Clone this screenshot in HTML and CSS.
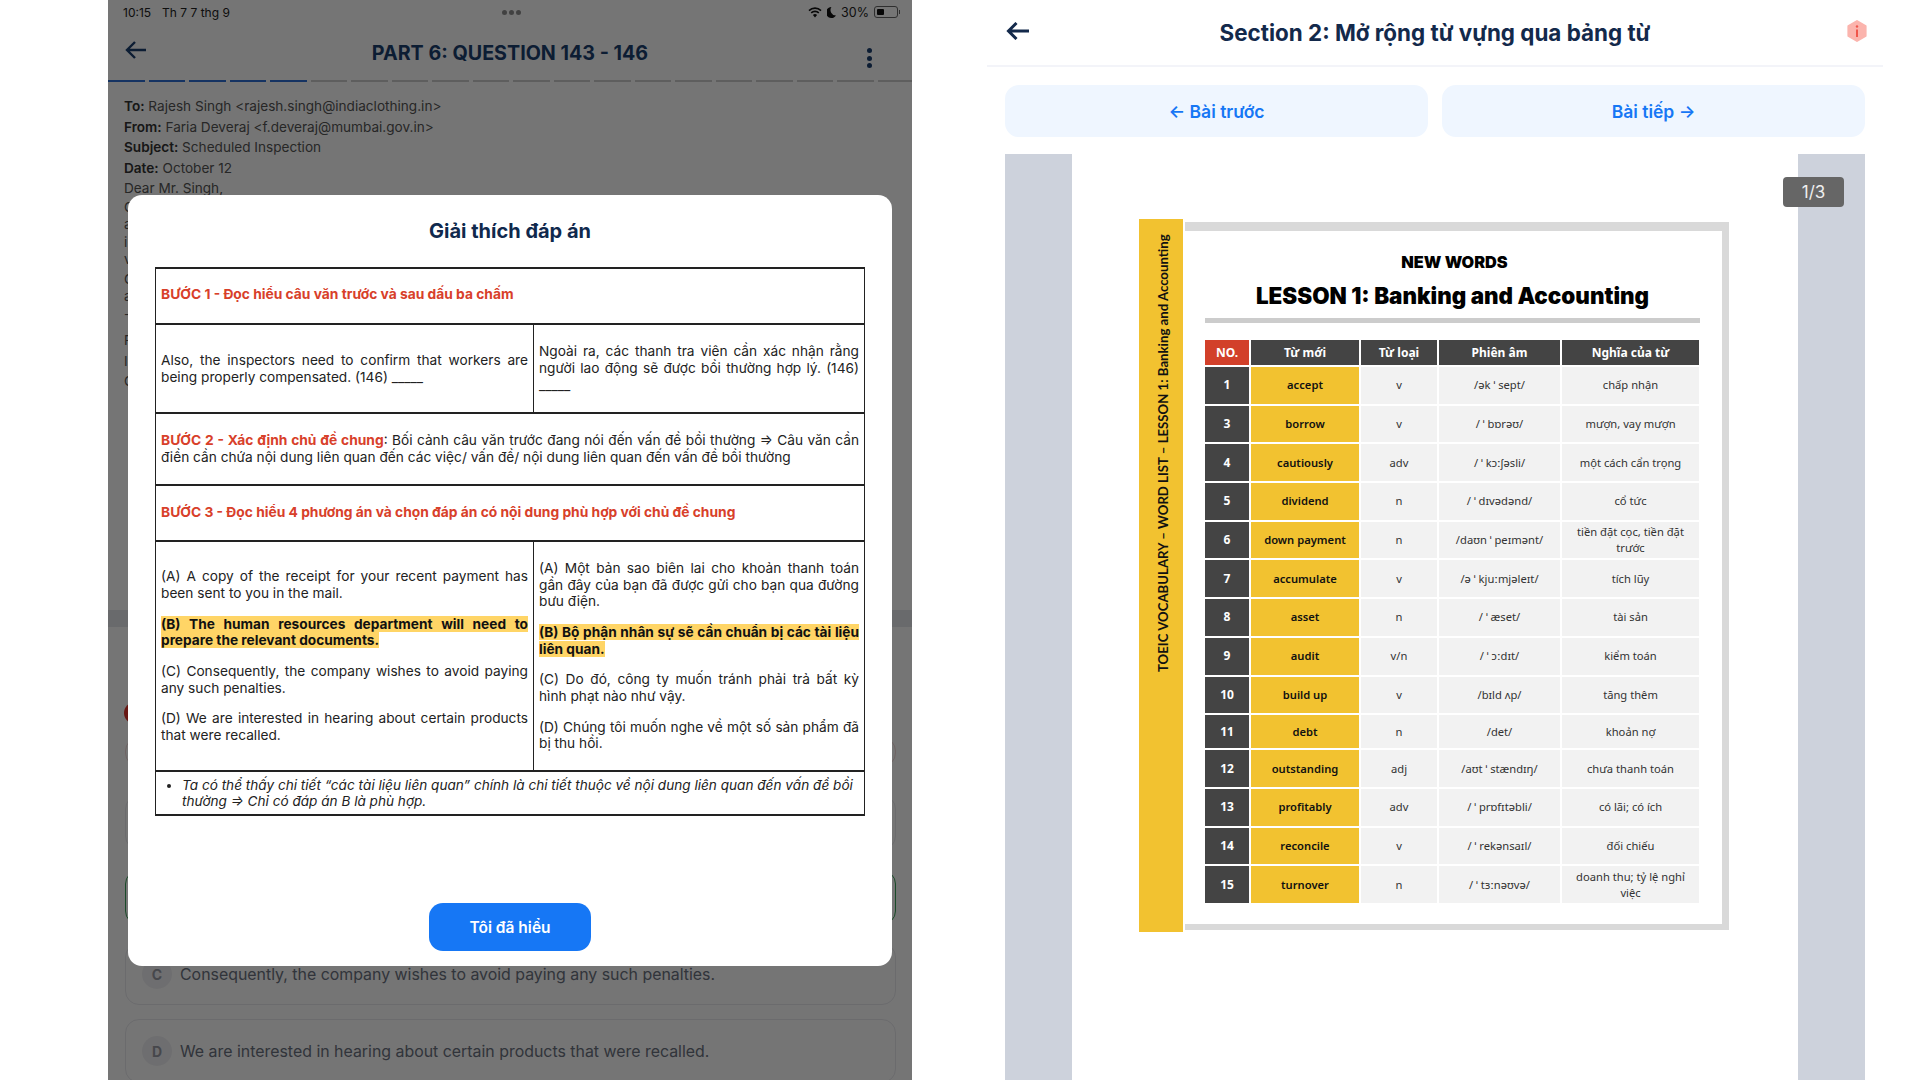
FILE: index.html
```html
<!DOCTYPE html>
<html lang="vi">
<head>
  <meta charset="UTF-8" />
  <meta name="viewport" content="width=device-width, initial-scale=1.0"/>
  <title>Giải thích đáp án</title>
  <link rel="stylesheet" href="styles.css">
</head>
<body>
  <div class="phone">
    <div class="status">
      <div class="status-left"><span>10:15</span><span>Th 7 7 thg 9</span></div>
      <div class="status-dots"><i></i><i></i><i></i></div>
      <div class="status-right">
        <svg width="14" height="11" viewBox="0 0 14 11"><path d="M1 3.6a8.6 8.6 0 0 1 12 0M3.2 5.9a5.4 5.4 0 0 1 7.6 0" fill="none" stroke="#111" stroke-width="1.6"/><path d="M7 10.6 4.9 8.1a3 3 0 0 1 4.2 0z" fill="#111"/></svg>
        <svg class="moon" width="9" height="11" viewBox="0 0 9 11"><path d="M4.4 0a5.5 5.5 0 1 0 4.6 8.6A5.6 5.6 0 0 1 4.4 0z" fill="#111"/></svg>
        <span>30%</span>
        <div class="battery"><div class="battery-fill"></div></div>
      </div>
    </div>

    <div class="topbar">
      <svg width="22" height="18" viewBox="0 0 22 18"><path d="M21 9H2M10 1 2 9l8 8" fill="none" stroke="#1c3f70" stroke-width="2.4"/></svg>
      <h1>PART 6: QUESTION 143 - 146</h1>
      <div class="kebab"><i></i><i></i><i></i></div>
    </div>

    <div class="progress">
      <i class="done"></i><i class="done"></i><i class="done"></i><i class="done"></i><i class="done"></i>
      <i></i><i></i><i></i><i></i><i></i><i></i><i></i><i></i><i></i><i></i><i></i><i></i><i></i><i></i><i></i>
    </div>

    <div class="passage">
      <p class="mail"><b>To:</b> Rajesh Singh &lt;rajesh.singh@indiaclothing.in&gt;</p>
      <p class="mail"><b>From:</b> Faria Deveraj &lt;f.deveraj@mumbai.gov.in&gt;</p>
      <p class="mail"><b>Subject:</b> Scheduled Inspection</p>
      <p class="mail"><b>Date:</b> October 12</p>
      <p class="mail">Dear Mr. Singh,</p>
      <div class="clipped">
        <p>C</p><p>a</p><p>i</p><p>v</p>
        <p class="gap">C</p><p>a</p><p>-</p>
        <p class="gap2">F</p><p>I</p><p>C</p>
      </div>
    </div>

    <div class="band"></div>
    <div class="dot-wrong"></div>

    <div class="options">
      <div class="opt opt-red"></div>
      <div class="opt opt-plain"></div>
      <div class="opt opt-green"></div>
      <div class="opt opt-c"><span class="letter">C</span>Consequently, the company wishes to avoid paying any such penalties.</div>
      <div class="opt opt-d"><span class="letter">D</span>We are interested in hearing about certain products that were recalled.</div>
    </div>

    <div class="dim"></div>

    <div class="modal">
      <h2>Giải thích đáp án</h2>
      <table class="explain">
        <colgroup><col class="col-a"><col class="col-b"></colgroup>
        <tr class="r1">
          <td colspan="2"><span class="step">BƯỚC 1 - Đọc hiểu câu văn trước và sau dấu ba chấm</span></td>
        </tr>
        <tr class="r2">
          <td>Also, the inspectors need to confirm that workers are being properly compensated. (146) _____</td>
          <td>Ngoài ra, các thanh tra viên cần xác nhận rằng người lao động sẽ được bồi thường hợp lý. (146) _____</td>
        </tr>
        <tr class="r3">
          <td colspan="2"><span class="step">BƯỚC 2 - Xác định chủ đề chung</span>: Bối cảnh câu văn trước đang nói đến vấn đề bồi thường ⇒ Câu văn cần điền cần chứa nội dung liên quan đến các việc/ vấn đề/ nội dung liên quan đến vấn đề bồi thường</td>
        </tr>
        <tr class="r4">
          <td colspan="2"><span class="step">BƯỚC 3 - Đọc hiểu 4 phương án và chọn đáp án có nội dung phù hợp với chủ đề chung</span></td>
        </tr>
        <tr class="r5">
          <td>
            <p>(A) A copy of the receipt for your recent payment has been sent to you in the mail.</p>
            <p><span class="hl">(B) The human resources department will need to prepare the relevant documents.</span></p>
            <p>(C) Consequently, the company wishes to avoid paying any such penalties.</p>
            <p>(D) We are interested in hearing about certain products that were recalled.</p>
          </td>
          <td>
            <p>(A) Một bản sao biên lai cho khoản thanh toán gần đây của bạn đã được gửi cho bạn qua đường bưu điện.</p>
            <p><span class="hl">(B) Bộ phận nhân sự sẽ cần chuẩn bị các tài liệu liên quan.</span></p>
            <p>(C) Do đó, công ty muốn tránh phải trả bất kỳ hình phạt nào như vậy.</p>
            <p>(D) Chúng tôi muốn nghe về một số sản phẩm đã bị thu hồi.</p>
          </td>
        </tr>
        <tr class="r6">
          <td colspan="2">
            <ul><li>Ta có thể thấy chi tiết “các tài liệu liên quan” chính là chi tiết thuộc về nội dung liên quan đến vấn đề bồi thường ⇒ Chỉ có đáp án B là phù hợp.</li></ul>
          </td>
        </tr>
      </table>
      <button class="ok">Tôi đã hiểu</button>
    </div>
  </div>

  <div class="detail">
    <div class="detail-head">
      <svg class="back" width="24" height="18" viewBox="0 0 24 18"><path d="M23 9H2.5M10.5 1 2.5 9l8 8" fill="none" stroke="#13294b" stroke-width="3"/></svg>
      <h1>Section 2: Mở rộng từ vựng qua bảng từ</h1>
      <svg class="info" width="20" height="22" viewBox="0 0 20 22"><path d="M10 1l8.6 5v10L10 21l-8.6-5V6z" fill="#fbb4ad" stroke="#fbb4ad" stroke-linejoin="round" stroke-width="2"/><path d="M10 9.5V17" stroke="#f0554a" stroke-width="2"/><circle cx="10" cy="6.5" r="1.2" fill="#f0554a"/></svg>
    </div>

    <div class="nav">
      <a class="nav-btn">← Bài trước</a>
      <a class="nav-btn">Bài tiếp →</a>
    </div>

    <div class="viewer">
      <div class="viewer-page">
        <div class="sheet">
          <div class="spine"><span>TOEIC VOCABULARY – WORD LIST – LESSON 1: Banking and Accounting</span></div>
          <div class="sheet-main">
            <div class="new-words">NEW WORDS</div>
            <div class="lesson">LESSON 1: Banking and Accounting</div>
            <div class="rule"></div>
            <div class="words">
              <div class="th no">NO.</div><div class="th">Từ mới</div><div class="th">Từ loại</div><div class="th">Phiên âm</div><div class="th">Nghĩa của từ</div>

              <div class="num">1</div><div class="w">accept</div><div class="c">v</div><div class="c">/ək ˈ sept/</div><div class="c">chấp nhận</div>
              <div class="num">3</div><div class="w">borrow</div><div class="c">v</div><div class="c">/ ˈ bɒrəʊ/</div><div class="c">mượn, vay mượn</div>
              <div class="num">4</div><div class="w">cautiously</div><div class="c">adv</div><div class="c">/ ˈ kɔːʃəsli/</div><div class="c">một cách cẩn trọng</div>
              <div class="num">5</div><div class="w">dividend</div><div class="c">n</div><div class="c">/ ˈ dɪvədənd/</div><div class="c">cổ tức</div>
              <div class="num">6</div><div class="w">down payment</div><div class="c">n</div><div class="c">/daʊn ˈ peɪmənt/</div><div class="c">tiền đặt cọc, tiền đặt trước</div>
              <div class="num">7</div><div class="w">accumulate</div><div class="c">v</div><div class="c">/ə ˈ kjuːmjəleɪt/</div><div class="c">tích lũy</div>
              <div class="num">8</div><div class="w">asset</div><div class="c">n</div><div class="c">/ ˈ æset/</div><div class="c">tài sản</div>
              <div class="num">9</div><div class="w">audit</div><div class="c">v/n</div><div class="c">/ ˈ ɔːdɪt/</div><div class="c">kiểm toán</div>
              <div class="num">10</div><div class="w">build up</div><div class="c">v</div><div class="c">/bɪld ʌp/</div><div class="c">tăng thêm</div>
              <div class="num">11</div><div class="w">debt</div><div class="c">n</div><div class="c">/det/</div><div class="c">khoản nợ</div>
              <div class="num">12</div><div class="w">outstanding</div><div class="c">adj</div><div class="c">/aʊt ˈ stændɪŋ/</div><div class="c">chưa thanh toán</div>
              <div class="num">13</div><div class="w">profitably</div><div class="c">adv</div><div class="c">/ ˈ prɒfɪtəbli/</div><div class="c">có lãi; có ích</div>
              <div class="num">14</div><div class="w">reconcile</div><div class="c">v</div><div class="c">/ ˈ rekənsaɪl/</div><div class="c">đối chiếu</div>
              <div class="num">15</div><div class="w">turnover</div><div class="c">n</div><div class="c">/ ˈ tɜːnəʊvə/</div><div class="c">doanh thu; tỷ lệ nghỉ việc</div>
            </div>
          </div>
        </div>
      </div>
      <div class="page-badge">1/3</div>
    </div>
  </div>
</body>
</html>
```
FILE: styles.css
```css
* {
  box-sizing: border-box;
}
html, body {
  margin: 0;
  height: 1080px;
  overflow: hidden;
}
body {
  display: flex;
  background: #fff;
  font-family: Inter, "Noto Sans", sans-serif;
  color: #222;
}

/* left: phone screen behind the dialog */
.phone {
  position: relative;
  width: 804px;
  height: 1080px;
  margin-left: 108px;
  overflow: hidden;
  background: #fff;
}
.status {
  display: grid;
  grid-template-columns: 1fr auto 1fr;
  align-items: center;
  height: 24px;
  padding: 0 12px 0 15px;
  font-size: 12px;
  color: #222;
}
.status-left {
  display: flex;
  gap: 11px;
}
.status-dots {
  display: flex;
  gap: 2px;
}
.status-dots i {
  width: 5px;
  height: 5px;
  border-radius: 50%;
  background: #8f8f8f;
}
.status-right {
  display: flex;
  justify-content: flex-end;
  align-items: center;
  gap: 5px;
  font-size: 12.5px;
}
.battery {
  position: relative;
  width: 24px;
  height: 12px;
  margin-right: 2px;
  padding: 2px;
  border: 1px solid #666;
  border-radius: 3px;
}
.battery-fill {
  width: 7px;
  height: 100%;
  border-radius: 1px;
  background: #111;
}
.battery::after {
  content: "";
  position: absolute;
  right: -3px;
  top: 3px;
  width: 1px;
  height: 4px;
  background: #666;
}
.topbar {
  display: grid;
  grid-template-columns: 1fr auto 1fr;
  align-items: center;
  height: 56px;
  padding: 0 40px;
}
.topbar svg {
  margin: -4px 0 0 -23px;
}
.topbar h1 {
  margin: 1px 0 0 0;
  font-size: 19.7px;
  font-weight: 700;
  color: #1c3f70;
}
.kebab {
  display: flex;
  flex-direction: column;
  justify-self: end;
  gap: 2.5px;
  margin-top: 12px;
}
.kebab i {
  width: 5px;
  height: 5px;
  border-radius: 50%;
  background: #1c3f70;
}
.progress {
  display: flex;
  gap: 4px;
  height: 2px;
}
.progress i {
  flex: 0 0 36.5px;
  background: #ccc;
}
.progress i.done {
  background: #2f6fd6;
}
.passage {
  height: 528px;
  padding: 14px 16px 0;
  font-size: 13.6px;
  color: #555;
}
.passage b {
  font-weight: 600;
  color: #333;
}
.mail {
  margin: 0;
  line-height: 20.5px;
}
.clipped p {
  margin: 0;
  line-height: 17.5px;
}
.clipped .gap {
  margin-top: 2px;
}
.clipped .gap2 {
  margin-top: 7px;
  line-height: 20.5px;
}
.clipped .gap2 ~ p {
  line-height: 20.5px;
}
.band {
  height: 17px;
  background: #e4e8ec;
}
.dot-wrong {
  width: 22px;
  height: 22px;
  margin: 75px 0 0 16px;
  border-radius: 50%;
  background: #e3342b;
}
.options {
  display: flex;
  flex-direction: column;
  margin: 0 16px 0 17px;
  font-size: 15.9px;
  color: #6b7280;
}
.opt {
  display: flex;
  align-items: center;
  border: 1px solid #e9e9ee;
  border-radius: 14px;
}
.opt-red {
  height: 30px;
  margin-top: 13px;
  border-color: #f0d8d8;
}
.opt-plain {
  height: 55px;
  margin-top: 28px;
}
.opt-green {
  height: 55px;
  margin-top: 20px;
  border: 1.5px solid #3aa35a;
}
.opt-c {
  height: 62px;
  margin-top: 18px;
  padding: 0 16px;
}
.opt-d {
  height: 64px;
  margin-top: 14px;
  padding: 0 16px;
}
.letter {
  display: flex;
  align-items: center;
  justify-content: center;
  flex: 0 0 30px;
  height: 30px;
  margin-right: 8px;
  border-radius: 50%;
  background: #f0f0f3;
  font-size: 14px;
  font-weight: 700;
  color: #9a9ca5;
}
.dim {
  position: absolute;
  inset: 0;
  background: rgba(0, 0, 0, 0.54);
}

/* dialog */
.modal {
  position: absolute;
  left: 20px;
  top: 195px;
  width: 764px;
  height: 771px;
  padding: 0 27px;
  border-radius: 14px;
  background: #fff;
}
.modal h2 {
  margin: 23px 0 0;
  font-size: 20px;
  line-height: 26px;
  font-weight: 700;
  text-align: center;
  color: #10294d;
}
.explain {
  width: 709px;
  margin-top: 23px;
  border-collapse: collapse;
  table-layout: fixed;
  border: 1px solid #444;
  font-size: 13.7px;
  line-height: 16.7px;
  color: #222;
}
.col-a {
  width: 378px;
}
.col-b {
  width: 331px;
}
.explain td {
  padding: 0 5px;
  border: 2px solid #222;
  border-left-width: 1px;
  border-right-width: 1px;
  text-align: justify;
  vertical-align: middle;
}
.explain p {
  margin: 0 0 14px;
}
.explain p:last-child {
  margin-bottom: 0;
}
.r1 td { padding-bottom: 3px; }
.r4 td { padding-bottom: 2px; }
.r1 { height: 56px; }
.r2 { height: 89px; }
.r3 { height: 72px; }
.r4 { height: 56px; }
.r5 { height: 230px; }
.r6 { height: 44px; }
.step {
  font-size: 13.8px;
  font-weight: 700;
  color: #d8402a;
}
.hl {
  font-weight: 700;
  background: #ffd566;
  color: #111;
}
.explain ul {
  margin: 0;
  padding: 0 0 0 21px;
  font-size: 13.6px;
  font-style: italic;
  line-height: 16px;
  text-align: left;
}
.ok {
  position: absolute;
  left: 301px;
  bottom: 15px;
  width: 162px;
  height: 48px;
  border: none;
  border-radius: 14px;
  background: #1677f5;
  color: #fff;
  font-family: inherit;
  font-size: 15.5px;
  font-weight: 600;
}

/* right: lesson viewer */
.detail {
  display: flex;
  flex-direction: column;
  width: 896px;
  margin-left: 75px;
}
.detail-head {
  position: relative;
  display: flex;
  justify-content: center;
  align-items: center;
  height: 67px;
  border-bottom: 2px solid #f3f4f9;
}
.detail-head h1 {
  margin: 0;
  font-size: 22.4px;
  font-weight: 700;
  color: #13294b;
}
.back {
  position: absolute;
  left: 19px;
  top: 22px;
}
.info {
  position: absolute;
  right: 16px;
  top: 20px;
}
.nav {
  display: flex;
  gap: 14px;
  margin: 18px 18px 0;
}
.nav-btn {
  display: flex;
  flex: 1;
  align-items: center;
  justify-content: center;
  height: 52px;
  border-radius: 14px;
  background: #eff6ff;
  font-size: 17.5px;
  font-weight: 600;
  color: #1677f5;
}
.viewer {
  position: relative;
  flex: 1;
  margin: 17px 18px 0;
  padding: 0 67px;
  background: #cdd2dc;
}
.viewer-page {
  height: 100%;
  padding: 65px 0 0 67px;
  background: #fff;
}
.page-badge {
  position: absolute;
  right: 21px;
  top: 23px;
  width: 61px;
  height: 30px;
  border-radius: 4px;
  background: #666;
  color: #eee;
  font-size: 17px;
  line-height: 30px;
  text-align: center;
}
.sheet {
  display: flex;
  width: 590px;
  height: 713px;
}
.spine {
  display: flex;
  justify-content: center;
  flex: 0 0 44px;
  height: 100%;
  padding-bottom: 260px;
  padding-left: 3px;
  background: #f2c230;
}
.spine span {
  writing-mode: vertical-rl;
  transform: rotate(180deg);
  font-family: Lato, sans-serif;
  font-size: 13.2px;
  font-weight: 700;
  color: #111;
  white-space: nowrap;
  text-align: left;
}
.sheet-main {
  width: 544px;
  height: 708px;
  margin: 3px 0 0 2px;
  padding: 0 22px 0 20px;
  border-top: 9px solid #d9d9d9;
  border-right: 7px solid #d9d9d9;
  border-bottom: 6px solid #d9d9d9;
  font-family: "Noto Sans", sans-serif;
}
.new-words {
  margin-top: 20px;
  padding-left: 4px;
  font-family: Inter, sans-serif;
  font-size: 16.3px;
  line-height: 22px;
  font-weight: 900;
  text-align: center;
  color: #000;
}
.lesson {
  margin-top: 8px;
  font-family: Inter, sans-serif;
  font-size: 22.4px;
  line-height: 30px;
  font-weight: 900;
  text-align: center;
  color: #000;
}
.rule {
  height: 5px;
  margin-top: 7px;
  background: #ccc;
}
.words {
  display: grid;
  grid-template-columns: 44px 108px 76px 121px 137px;
  grid-template-rows: 25px repeat(9, 36.7px) 33px repeat(4, 36.7px);
  gap: 2px;
  margin-top: 17px;
  font-size: 11.2px;
  line-height: 16px;
  text-align: center;
  color: #333;
}
.words > div {
  display: flex;
  align-items: center;
  justify-content: center;
}
.th {
  background: #444;
  color: #fff;
  font-size: 12px;
  font-weight: 700;
}
.th.no {
  background: #d2402a;
}
.num {
  background: #444;
  color: #fff;
  font-size: 12px;
  font-weight: 700;
}
.w {
  background: #f2c230;
  color: #111;
  font-weight: 600;
}
.c {
  padding: 0 8px;
  background: #f2f2f2;
}
```
